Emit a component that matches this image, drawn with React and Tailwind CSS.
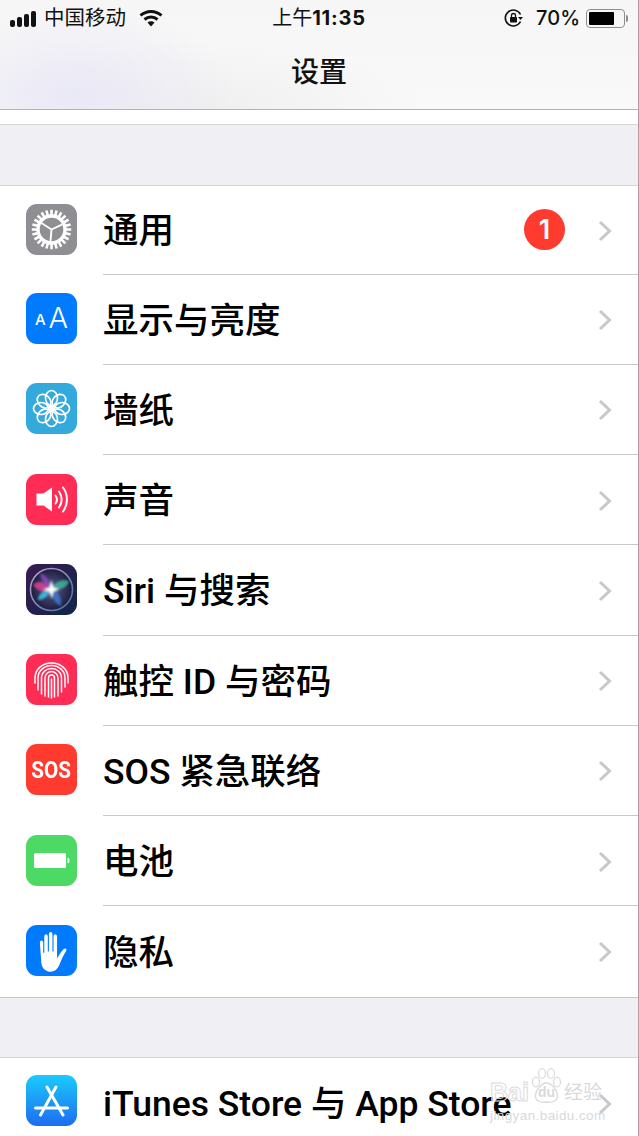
import React from 'react';

const cjk = 'font-["Inter","Noto_Sans_CJK_SC",sans-serif]';

const Gear = () => {
  const teeth = Array.from({ length: 24 }, (_, i) => i * 15);
  return (
    <svg viewBox="0 0 51 51" className="w-full h-full">
      <rect width="51" height="51" fill="#8e8e93" />
      <g stroke="#fff">
        {teeth.map((a) => (
          <line key={a} x1="25.5" y1="12" x2="25.5" y2="5.8" strokeWidth="2.6" transform={`rotate(${a} 25.5 25.5)`} />
        ))}
      </g>
      <circle cx="25.5" cy="25.5" r="13.5" fill="#8e8e93" stroke="#fff" strokeWidth="3.4" />
      <g stroke="#fff" strokeWidth="1.9">
        <line x1="25.5" y1="25.5" x2="25.5" y2="13" transform="rotate(-57 25.5 25.5)" />
        <line x1="25.5" y1="25.5" x2="25.5" y2="13" transform="rotate(65 25.5 25.5)" />
        <line x1="25.5" y1="25.5" x2="25.5" y2="13" transform="rotate(185 25.5 25.5)" />
      </g>
    </svg>
  );
};

const AaIcon = () => (
  <div className="w-full h-full bg-[#007aff] flex items-end justify-center gap-[3px] pb-[15px] font-['Inter',sans-serif] text-white leading-none">
    <span className="text-[15px] leading-[11px] mb-[4px] font-medium">A</span>
    <span className="text-[29px] font-light leading-[22px]">A</span>
  </div>
);

const Flower = () => (
  <svg viewBox="0 0 51 51" className="w-full h-full">
    <rect width="51" height="51" fill="#34aadc" />
    <g fill="none" stroke="#fff" strokeWidth="1.7">
      {[0, 45, 90, 135, 180, 225, 270, 315].map((a) => (
        <ellipse key={a} cx="25.5" cy="15" rx="6" ry="7.5" transform={`rotate(${a} 25.5 25.5)`} />
      ))}
    </g>
    <circle cx="25.5" cy="25.5" r="2.8" fill="#fff" />
  </svg>
);

const Sound = () => (
  <svg viewBox="0 0 51 51" className="w-full h-full">
    <rect width="51" height="51" fill="#ff2d55" />
    <path d="M10.5 19.5h7L26 13.5v24l-8.500-6h-7z" fill="#fff" />
    <g fill="none" stroke="#fff" strokeWidth="2" strokeLinecap="round">
      <path d="M29.500 21.500c1.800 2.500 1.800 5.500 0 8" />
      <path d="M33 17.500c3.500 4.800 3.500 11.200 0 16" />
      <path d="M37 13.500c5.300 7 5.300 17 0 24" />
    </g>
  </svg>
);

const Siri = () => (
  <svg viewBox="0 0 51 51" className="w-full h-full">
    <defs>
      <linearGradient id="siribg" x1="0" y1="0" x2="1" y2="1">
        <stop offset="0" stopColor="#3a1a52" />
        <stop offset="1" stopColor="#10254a" />
      </linearGradient>
      <radialGradient id="siriin" cx="0.5" cy="0.5" r="0.5">
        <stop offset="0" stopColor="#5a5f8c" />
        <stop offset="1" stopColor="#1c1b3e" />
      </radialGradient>
      <linearGradient id="siriring" x1="0" y1="0" x2="1" y2="1">
        <stop offset="0" stopColor="#b9a6c9" />
        <stop offset="1" stopColor="#3f6f96" />
      </linearGradient>
      <filter id="siriblur">
        <feGaussianBlur stdDeviation="1.3" />
      </filter>
    </defs>
    <rect width="51" height="51" fill="url(#siribg)" />
    <circle cx="25.5" cy="25.5" r="21" fill="url(#siriin)" stroke="url(#siriring)" strokeWidth="1.6" />
    <g filter="url(#siriblur)">
      <path d="M7 21c6-6 12-2 18 4-6 4-13 3-18-4z" fill="#e0408f" opacity="0.85" />
      <path d="M14 9c6 1 10 8 11.500 16-6-3-11-9-11.500-16z" fill="#9a4fd0" opacity="0.7" />
      <path d="M25 25c5-8 11-10 18-8-2 7-10 10-18 8z" fill="#3fc7a6" opacity="0.75" />
      <path d="M25 25c7 2 11 8 10 17-6-2-10-9-10-17z" fill="#3f7fe0" opacity="0.75" />
      <path d="M25 25c-2 7-7 11-13 11 0-6 6-10 13-11z" fill="#38c8e8" opacity="0.85" />
      <path d="M25.500 16l2 7.500 6 2-6 2-2 7-2-7-6-2 6-2z" fill="#fff" />
    </g>
  </svg>
);

const Finger = () => (
  <svg viewBox="0 0 51 51" className="w-full h-full">
    <rect width="51" height="51" fill="#ff2d55" />
    <g fill="none" stroke="#fff" strokeWidth="1.5" strokeLinecap="round">
      <path d="M9 29v-5c0-9 7.500-15 16.500-15S42 15 42 24v5" />
      <path d="M12 36v-12c0-7 6-12.500 13.500-12.500S39 17 39 24v9" />
      <path d="M15.500 40V24c0-5.500 4.500-9.500 10-9.500s10 4 10 9.500v14" />
      <path d="M19 42V24c0-3.500 3-6.500 6.500-6.500S32 20.500 32 24v18" />
      <path d="M22.500 43V24c0-1.700 1.300-3 3-3s3 1.300 3 3v19" />
      <path d="M25.500 25v19" />
    </g>
  </svg>
);

const Sos = () => (
  <div className="w-full h-full bg-[#ff3b30] flex items-center justify-center font-['Roboto',sans-serif] font-bold text-white text-[24px] leading-none">
    <span className="[transform:scaleX(0.86)]">SOS</span>
  </div>
);

const Battery = () => (
  <svg viewBox="0 0 51 51" className="w-full h-full">
    <rect width="51" height="51" fill="#4cd964" />
    <rect x="8" y="18" width="32" height="15" rx="1.500" fill="#fff" />
    <path d="M41.500 22.500v6c1.300-.3 2-1.500 2-3s-.7-2.700-2-3z" fill="#fff" />
  </svg>
);

const Hand = () => (
  <svg viewBox="0 0 51 51" className="w-full h-full">
    <rect width="51" height="51" fill="#007aff" />
    <path
      transform="translate(-1.500 -5.6) scale(1.1 1.26)"
      d="M14 18.500c0-1 .7-1.700 1.500-1.700s1.500.7 1.500 1.700v8h1V13.500c0-1 .7-1.800 1.600-1.800s1.600.8 1.600 1.800v12h1V11.800c0-1 .7-1.800 1.600-1.800s1.600.8 1.600 1.800v13.700h1V13.500c0-1 .7-1.800 1.600-1.800s1.600.8 1.600 1.800V31c1.500-2 3.500-5.500 6-7.500 1-.8 2.300-.5 2.500.3.200.6-.2 1.200-.7 1.900-2 2.700-3.700 6-5.300 9.500-1.700 3.800-4 6.300-8.500 6.300-5.500 0-8.500-3.500-8.500-9z"
      fill="#fff"
    />
  </svg>
);

const AppStore = () => (
  <svg viewBox="0 0 51 51" className="w-full h-full">
    <defs>
      <linearGradient id="appbg" x1="0" y1="0" x2="0" y2="1">
        <stop offset="0" stopColor="#1bcbfd" />
        <stop offset="1" stopColor="#1d6cf0" />
      </linearGradient>
    </defs>
    <rect width="51" height="51" fill="url(#appbg)" />
    <g stroke="#fff" strokeWidth="3" strokeLinecap="round" fill="none">
      <path d="M21 12l16 28" />
      <path d="M30 12L14.500 40" />
      <path d="M9.500 33h32" />
    </g>
  </svg>
);

const rows = [
  { label: '通用', icon: <Gear />, badge: '1', height: 'h-[88.5px]' },
  { label: '显示与亮度', icon: <AaIcon /> },
  { label: '墙纸', icon: <Flower /> },
  { label: '声音', icon: <Sound /> },
  { label: 'Siri 与搜索', icon: <Siri /> },
  { label: '触控 ID 与密码', icon: <Finger /> },
  { label: 'SOS 紧急联络', icon: <Sos /> },
  { label: '电池', icon: <Battery /> },
  { label: '隐私', icon: <Hand /> },
];

const Chevron = () => (
  <svg width="14" height="22" viewBox="0 0 14 22" className="shrink-0 mt-[2px]">
    <path d="M2 2l9.500 9L2 20" fill="none" stroke="#c7c7cc" strokeWidth="3" />
  </svg>
);

const Row = ({ label, icon, badge, last, height = 'h-[90.25px]', iconGap = 'mb-[2px]' }) => (
  <div className={`flex ${height} pl-[26px] bg-white`}>
    <div className={`w-[51px] h-[51px] self-center rounded-[11px] overflow-hidden shrink-0 mr-[26px] ${iconGap}`}>{icon}</div>
    <div className={`flex-1 flex items-center pr-[26px] border-[#c8c7cc] ${last ? '' : 'border-b'}`}>
      <span className="flex-1 pt-[4px] text-[35.5px] font-medium text-black whitespace-nowrap font-['Roboto','Noto_Sans_CJK_SC',sans-serif]">
        {label}
      </span>
      {badge && (
        <span className="w-[41px] h-[41px] mr-[33px] rounded-full bg-[#ff3b30] text-white text-[27px] font-semibold flex items-center justify-center">
          {badge}
        </span>
      )}
      <Chevron />
    </div>
  </div>
);

const StatusBar = () => (
  <div className="grid grid-cols-[1fr_auto_1fr] items-center h-[36px] pl-[10px] pr-[10px] text-[20px] text-[#111] leading-none">
    <div className="flex items-center">
      <div className="flex items-end gap-[2px] h-[17px] mr-[8px]">
        <span className="w-[5px] h-[7px] rounded-[2px] bg-[#111]" />
        <span className="w-[5px] h-[10px] rounded-[2px] bg-[#111]" />
        <span className="w-[5px] h-[13px] rounded-[2px] bg-[#111]" />
        <span className="w-[5px] h-[16px] rounded-[2px] bg-[#111]" />
      </div>
      <span className="text-[20.5px]">中国移动</span>
      <svg width="24" height="18" viewBox="0 0 24 18" className="ml-[13px]">
        <g fill="none" stroke="#111" strokeWidth="3">
          <path d="M1.500 6.500c6-5.500 15-5.500 21 0" />
          <path d="M5.500 10.500c3.800-3.300 9.200-3.300 13 0" />
        </g>
        <path d="M8.500 13.500c2-1.600 5-1.600 7 0L12 17.500z" fill="#111" />
      </svg>
    </div>
    <div className="flex items-center">
      <span>上午</span>
      <span className="font-bold tracking-[0.8px]">11:35</span>
    </div>
    <div className="flex items-center justify-end">
      <svg width="20" height="20" viewBox="0 0 20 20" className="mr-[12px]">
        <path d="M16.500 6.500A8 8 0 1 0 16.500 13.500" fill="none" stroke="#111" strokeWidth="1.600" />
        <path d="M14 9h5l-2.500 3z" fill="#111" />
        <rect x="6" y="9" width="7" height="5.500" rx="0.800" fill="#111" />
        <path d="M7.500 9V7.500a2 2 0 0 1 4 0V9" fill="none" stroke="#111" strokeWidth="1.300" />
      </svg>
      <span className="font-medium mr-[6px]">70%</span>
      <div className="w-[39px] h-[19px] rounded-[4px] border border-[#8e8e8e] p-[2px]">
        <div className="w-[25px] h-full bg-black rounded-[1px]" />
      </div>
      <span className="w-[2px] h-[7px] ml-[1px] rounded-r-[2px] bg-[#8e8e8e]" />
    </div>
  </div>
);

const Watermark = () => (
  <div className="absolute left-[490px] top-[1068px] w-[116px] flex flex-col text-[#d9d9dc] pointer-events-none font-['Liberation_Sans','Noto_Sans_CJK_SC',sans-serif]">
    <div className="flex items-end h-[36px]">
      <span className="text-[25px] leading-[24px] font-bold text-transparent [-webkit-text-stroke:1px_#dcdcde]">Bai</span>
      <div className="relative w-[33px] h-[36px] shrink-0 mx-[1px]">
        <svg width="33" height="36" viewBox="0 0 33 36">
          <g fill="none" stroke="#dcdcde" strokeWidth="1.300">
            <ellipse cx="6" cy="14" rx="3.500" ry="4.800" />
            <ellipse cx="12" cy="5.500" rx="3.500" ry="4.800" />
            <ellipse cx="21" cy="5.500" rx="3.500" ry="4.800" />
            <ellipse cx="27" cy="14" rx="3.500" ry="4.800" />
            <path d="M16.500 15c-5 0-11 7-11 13 0 5 5 7 11 6 6 1 11-1 11-6 0-6-6-13-11-13z" />
          </g>
        </svg>
        <span className="absolute left-[8px] top-[17px] text-[14px] leading-[15px] font-bold text-[#d9d9dc]">du</span>
      </div>
      <span className="text-[19px] leading-[23px] whitespace-nowrap">经验</span>
    </div>
    <div className="text-[13.5px] leading-[14px] mt-[5px] whitespace-nowrap tracking-[0.4px]">jingyan.baidu.com</div>
  </div>
);

const App = () => (
  <div className={`relative w-[639px] h-[1136px] overflow-hidden bg-[#efeff4] border-r border-[#a3a3a3] ${cjk}`}>
    <header className="h-[110px] border-b border-[#b2b2b2] bg-[radial-gradient(ellipse_160px_90px_at_75px_95px,#e9e8f6,transparent),radial-gradient(ellipse_220px_70px_at_200px_110px,#efefef,transparent),linear-gradient(#f6f6f6,#f9f9f9)]">
      <StatusBar />
      <h1 className="text-center text-[28px] leading-[72px] font-medium text-[#111]">设置</h1>
    </header>
    <div className="h-[15px] bg-white border-b border-[#d4d4d6]" />
    <div className="h-[61px] border-b border-[#d4d4d6]" />
    <section className="border-b border-[#c8c7cc]">
      {rows.map((r, i) => (
        <Row key={r.label} {...r} last={i === rows.length - 1} />
      ))}
    </section>
    <div className="h-[60px] border-b border-[#d4d4d6]" />
    <Row label="iTunes Store 与 App Store" icon={<AppStore />} last iconGap="mb-[5px]" />
    <Watermark />
  </div>
);

export default App;
